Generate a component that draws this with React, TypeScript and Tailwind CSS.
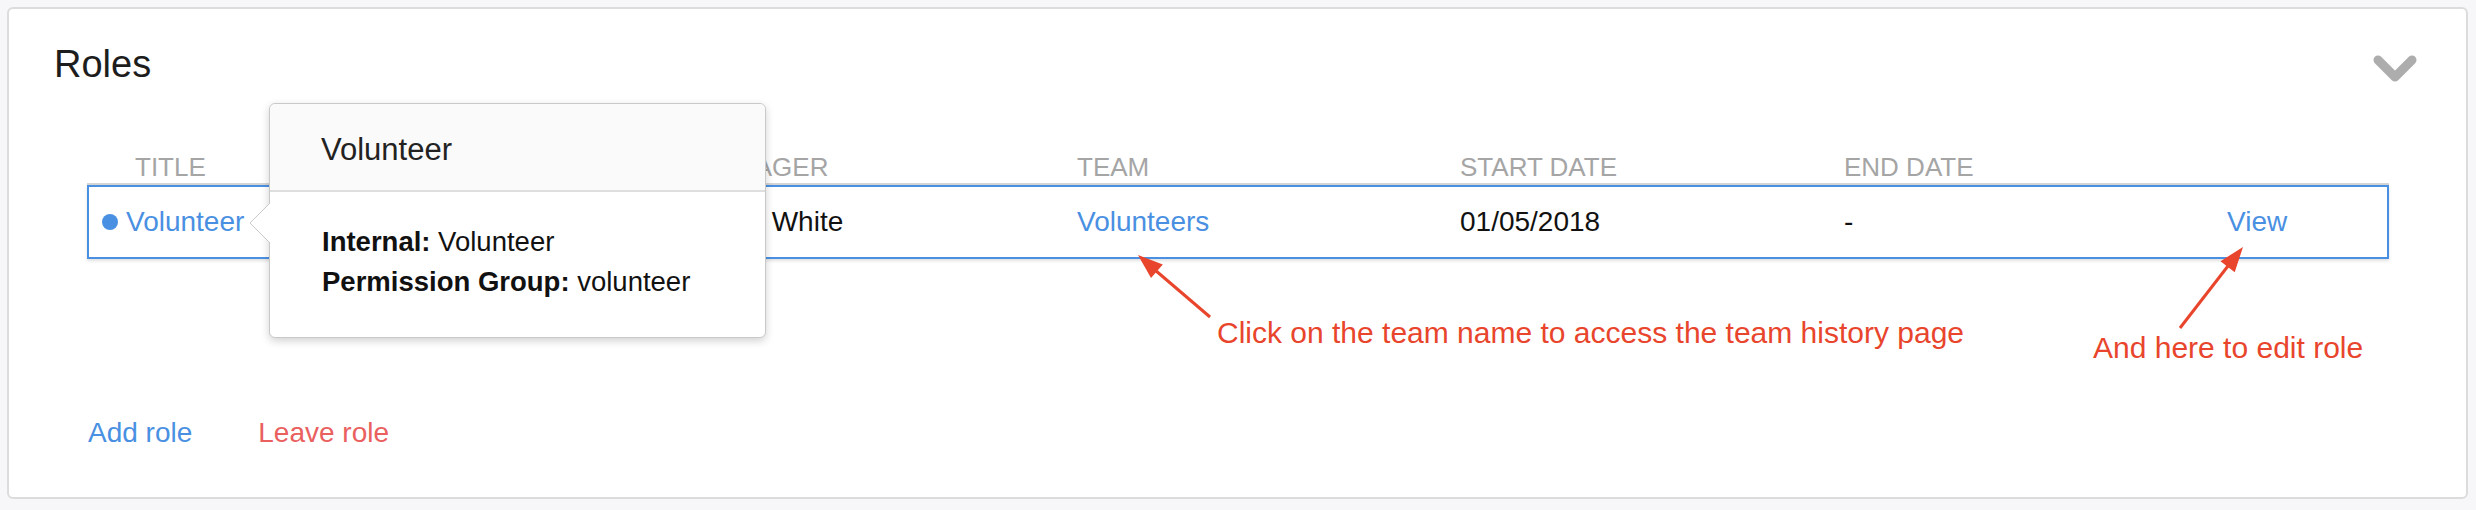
import React from "react";

const columns = "grid grid-cols-[608px_380px_383px_384px_383px_1fr]";

const ChevronDown = () => (
  <svg width="44" height="29" viewBox="0 0 44 29" className="mt-[13px]">
    <path
      d="M5 5 L22 22 L39 5"
      fill="none"
      stroke="#adadad"
      strokeWidth="9"
      strokeLinecap="round"
      strokeLinejoin="round"
    />
  </svg>
);

const RolePopover = () => (
  <div className="absolute left-[182px] top-[-49px] z-10 w-[497px] h-[235px] bg-white border border-[#c9c9c9] rounded-[6px] shadow-[0_3px_8px_rgba(0,0,0,0.18)]">
    <svg width="21" height="40" viewBox="0 0 21 40" className="absolute left-[-21px] top-[99px]">
      <polygon points="21,0 1,20 21,40" fill="#ffffff" />
      <path d="M21 0 L1 20 L21 40" fill="none" stroke="#c9c9c9" strokeWidth="1" />
    </svg>
    <div className="h-[88px] pt-[28px] pl-[51px] bg-[#fafafa] border-b-2 border-[#dedede] rounded-t-[6px]">
      <p className="text-[31px] leading-[35px] text-[#222]">Volunteer</p>
    </div>
    <div className="pt-[30px] pl-[52px] text-[27.5px] leading-[40px] text-[#111]">
      <p>
        <span className="font-bold">Internal:</span> Volunteer
      </p>
      <p>
        <span className="font-bold">Permission Group:</span> volunteer
      </p>
    </div>
  </div>
);

const Annotations = () => (
  <>
    <svg
      width="2476"
      height="510"
      viewBox="0 0 2476 510"
      className="absolute left-0 top-0 pointer-events-none"
    >
      <line x1="1210" y1="317" x2="1155" y2="270" stroke="#e8452c" strokeWidth="3" />
      <polygon points="1138,255 1162.8,264.5 1151,278.1" fill="#e8452c" />
      <line x1="2180" y1="328" x2="2228" y2="266" stroke="#e8452c" strokeWidth="3" />
      <polygon points="2243,247 2234.7,272.2 2220.5,261.2" fill="#e8452c" />
    </svg>
    <p className="absolute left-[1217px] top-[318px] text-[30px] leading-[30px] text-[#e8452c]">
      Click on the team name to access the team history page
    </p>
    <p className="absolute left-[2093px] top-[333px] text-[30px] leading-[30px] text-[#e8452c]">
      And here to edit role
    </p>
  </>
);

export default function App() {
  return (
    <div className="relative w-[2476px] h-[510px] bg-[#f7f7fa] pt-[7px] pl-[7px] pr-[8px] font-['Liberation_Sans',Arial,sans-serif]">
      <section className="h-[492px] bg-white border-2 border-[#dcdcdc] rounded-[6px] pt-[33px]">
        <div className="flex justify-between items-start pl-[45px] pr-[49px]">
          <h2 className="text-[38px] leading-[44px] text-[#1d1d1d]">Roles</h2>
          <ChevronDown />
        </div>

        <div className="relative mt-[66px] ml-[78px] mr-[77px]">
          <div
            className={`${columns} px-[2px] pb-[1px] border-b-2 border-[#d5d5d5] text-[26px] leading-[30px] text-[#a5a5a5]`}
          >
            <span className="pl-[46px]">TITLE</span>
            <span>MANAGER</span>
            <span>TEAM</span>
            <span>START DATE</span>
            <span>END DATE</span>
            <span></span>
          </div>

          <div
            className={`${columns} items-center h-[74px] border-2 border-[#4a90e2] text-[28px] leading-[32px] text-[#111] shadow-[0_2px_3px_rgba(0,0,0,0.12)]`}
          >
            <div className="flex items-center gap-[8px] pl-[13px]">
              <span className="w-[16px] h-[16px] rounded-full bg-[#4a90e2]" />
              <a className="text-[#4a90e2]">Volunteer</a>
            </div>
            <span>Barry White</span>
            <a className="text-[#4a90e2]">Volunteers</a>
            <span>01/05/2018</span>
            <span>-</span>
            <a className="text-[#4a90e2]">View</a>
          </div>

          <RolePopover />
        </div>

        <div className="flex gap-[66px] mt-[158px] pl-[79px] text-[28px] leading-[32px]">
          <a className="text-[#4a90e2]">Add role</a>
          <a className="text-[#e9605e]">Leave role</a>
        </div>
      </section>

      <Annotations />
    </div>
  );
}
